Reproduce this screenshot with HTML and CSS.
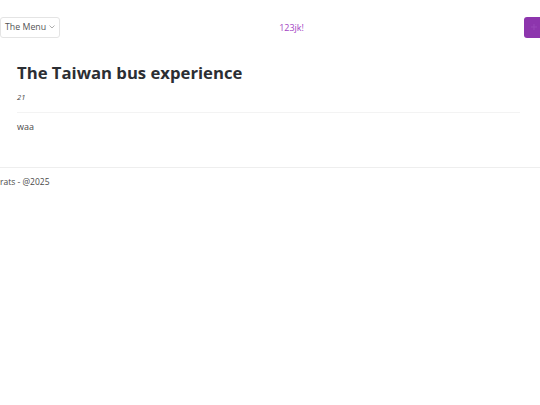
FILE: index.html
```html
<!DOCTYPE html>
<html>
<head>
<meta charset="utf-8">
<link rel="stylesheet" href="styles.css">
</head>
<body>
<header class="topbar">
  <button class="menu-btn">The Menu <svg class="chev" width="6" height="4" viewBox="0 0 6 4"><path d="M0.5 0.5 L3 3 L5.5 0.5" fill="none" stroke="#999" stroke-width="0.8"/></svg></button>
  <div class="brand">123jk!</div>
  <button class="action-btn"><svg width="8" height="8" viewBox="0 0 8 8"><path d="M4 1v6M1 4h6" stroke="#9847b8" stroke-width="1"/></svg></button>
</header>
<main class="content">
  <h1 class="title">The Taiwan bus experience</h1>
  <div class="meta">21</div>
  <div class="body-text">waa</div>
</main>
<footer class="footer">rats - @2025</footer>
</body>
</html>
```
FILE: styles.css
```css
html, body {
  margin: 0;
  padding: 0;
  background: #fff;
  font-family: "Open Sans", "Noto Sans", sans-serif;
  color: #2b2e33;
}
.topbar {
  display: flex;
  align-items: center;
  justify-content: space-between;
  height: 20px;
  padding-top: 17px;
}
.menu-btn {
  display: flex;
  align-items: center;
  gap: 3px;
  height: 21px;
  padding: 0 4px 0 4px;
  margin: 0;
  border: 1px solid #e4e4e4;
  border-radius: 3px;
  background: #fff;
  font-family: "Open Sans", sans-serif;
  font-size: 8.8px;
  color: #555;
}
.brand {
  font-size: 9px;
  color: #a445c4;
  margin-left: -1px;
}
.action-btn {
  width: 20px;
  height: 21px;
  margin: 0 -4px 0 0;
  padding: 0;
  border: none;
  border-radius: 3px;
  background: #8d35ad;
  display: flex;
  align-items: center;
  justify-content: center;
}
.content {
  padding: 24px 20px 0 17px;
}
.title {
  margin: 0;
  font-size: 16.7px;
  font-weight: 700;
  line-height: 24px;
}
.meta {
  margin-top: 7px;
  font-size: 7.5px;
  font-style: italic;
  color: #444;
  padding-bottom: 10px;
  border-bottom: 1px solid #f3f3f3;
}
.body-text {
  margin-top: 7px;
  font-size: 9px;
  color: #4a4a4a;
  padding-bottom: 34px;
}
.footer {
  border-top: 1px solid #eee;
  padding-top: 8px;
  font-size: 8.5px;
  color: #4a4a4a;
}
```
